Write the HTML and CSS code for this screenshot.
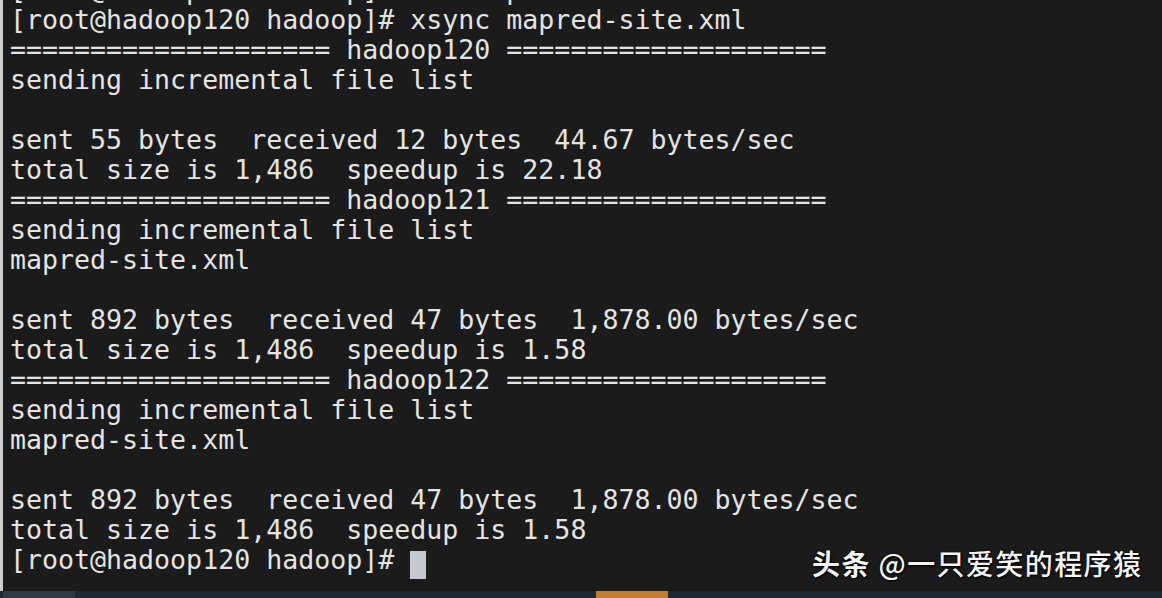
FILE: index.html
```html
<!DOCTYPE html>
<html lang="zh-CN">
<head>
<meta charset="utf-8">
<title>terminal</title>
<link rel="stylesheet" href="styles.css">
</head>
<body>
<div class="screen">
  <div class="term">
<pre class="out">[root@hadoop120 hadoop]# vim mapred-site.xml
[root@hadoop120 hadoop]# xsync mapred-site.xml
==================== hadoop120 ====================
sending incremental file list

sent 55 bytes  received 12 bytes  44.67 bytes/sec
total size is 1,486  speedup is 22.18
==================== hadoop121 ====================
sending incremental file list
mapred-site.xml

sent 892 bytes  received 47 bytes  1,878.00 bytes/sec
total size is 1,486  speedup is 1.58
==================== hadoop122 ====================
sending incremental file list
mapred-site.xml

sent 892 bytes  received 47 bytes  1,878.00 bytes/sec
total size is 1,486  speedup is 1.58
[root@hadoop120 hadoop]# <span class="cursor"> </span></pre>
    <div class="mark"><b class="brand">头条</b> @一只爱笑的程序猿</div>
  </div>
  <div class="bar">
    <span class="gap-a"></span>
    <span class="seg"></span>
    <span class="gap-b"></span>
    <span class="seg seg-orange"></span>
  </div>
</div>
</body>
</html>
```

FILE: styles.css
```css
html, body {
  margin: 0;
  padding: 0;
  background: #1b1b1b;
}
.screen {
  width: 1162px;
  height: 598px;
  display: flex;
  flex-direction: column;
  overflow: hidden;
}
.term {
  position: relative;
  height: 591px;
  flex: none;
  background: #1b1b1b;
  border-left: 3px solid #cfcfcf;
  box-sizing: border-box;
  padding-left: 7px;
  overflow: hidden;
}
.out {
  margin: -25px 0 0 0;
  font-family: "DejaVu Sans Mono", "Liberation Mono", monospace;
  font-size: 26.6px;
  line-height: 30px;
  color: #e4e4e4;
  white-space: pre;
}
.cursor {
  display: inline-block;
  width: 16px;
  height: 28px;
  vertical-align: -6px;
  background: #c6c8d0;
}
.mark {
  position: absolute;
  left: 809px;
  top: 546px;
  font-family: "Noto Sans CJK SC", "Noto Sans", sans-serif;
  font-size: 28px;
  font-weight: 500;
  letter-spacing: 1.4px;
  line-height: 34px;
  color: #f4f4f4;
  white-space: nowrap;
  text-shadow: 1px 1px 2px #000, 0 0 2px #000;
}
.brand {
  font-weight: 700;
}
.bar {
  flex: 1;
  display: flex;
  background: #1d2a32;
}
.gap-a { width: 3px; flex: none; }
.seg { width: 72px; flex: none; background: #2e3a42; }
.gap-b { width: 521px; flex: none; }
.seg-orange { background: #c47c30; }
```
